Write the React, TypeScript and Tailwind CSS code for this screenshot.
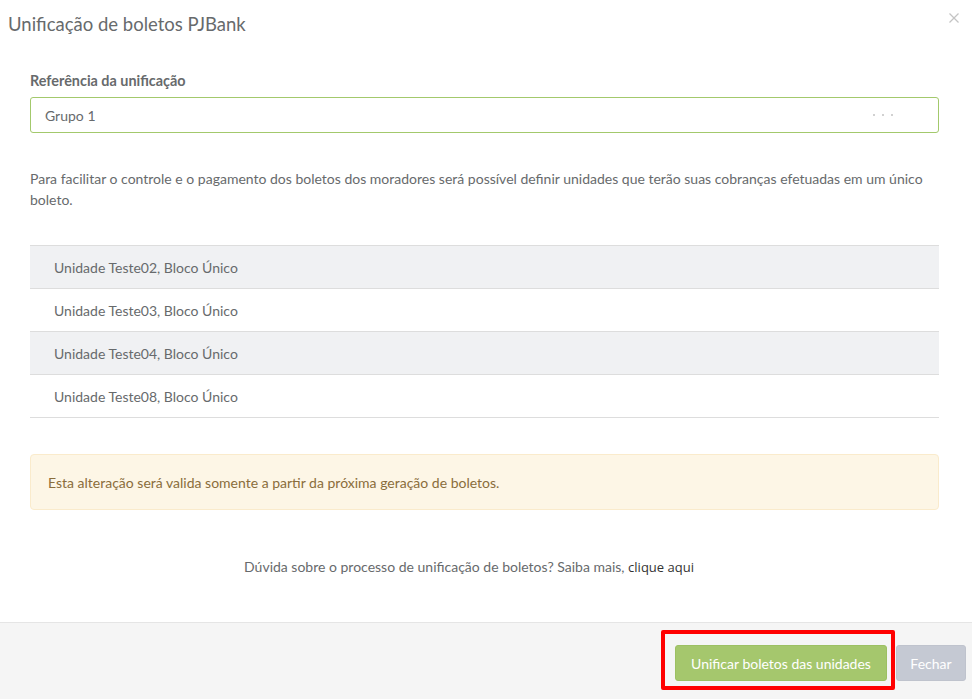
import React from "react";

const units = [
  "Unidade Teste02, Bloco Único",
  "Unidade Teste03, Bloco Único",
  "Unidade Teste04, Bloco Único",
  "Unidade Teste08, Bloco Único",
];

export default function App() {
  return (
    <div
      className="w-[972px] h-[699px] bg-white text-[#676a6c] flex flex-col overflow-hidden"
      style={{ fontFamily: "Lato, 'Open Sans', Arial, sans-serif" }}
    >
      {/* header */}
      <div className="h-[48px] flex items-center justify-between pl-[8px] pr-[12px] shrink-0">
        <h4 className="text-[18.5px] leading-[24px] text-[#676a6c]">Unificação de boletos PJBank</h4>
        <button className="w-[12px] h-[12px] -mt-[12px] flex items-center justify-center">
          <svg width="10" height="10" viewBox="0 0 10 10" stroke="#c4c4c4" strokeWidth="1.3">
            <line x1="0.5" y1="0.5" x2="9.5" y2="9.5" />
            <line x1="9.5" y1="0.5" x2="0.5" y2="9.5" />
          </svg>
        </button>
      </div>

      {/* body */}
      <div className="pl-[30px] pr-[33px] pt-[24px]">
        <label className="block text-[14.4px] leading-[18px] font-bold text-[#676a6c] mb-[7px]">
          Referência da unificação
        </label>
        <div className="h-[36px] border border-[#a3c96c] rounded-[3px] flex items-center pl-[14px] pr-[45px] justify-between">
          <span className="text-[14px] text-[#676a6c]">Grupo 1</span>
          <span className="flex gap-[7px]">
            <span className="w-[2px] h-[2px] rounded-full bg-[#c2c2c2]" />
            <span className="w-[2px] h-[2px] rounded-full bg-[#c2c2c2]" />
            <span className="w-[2px] h-[2px] rounded-full bg-[#c2c2c2]" />
          </span>
        </div>

        <p className="mt-[35px] text-[14px] leading-[21px] text-[#676a6c]">
          Para facilitar o controle e o pagamento dos boletos dos moradores será possível definir unidades que terão suas cobranças efetuadas em um único boleto.
        </p>

        <ul className="mt-[35px] border-b border-[#dddddd]">
          {units.map((u, i) => (
            <li
              key={u}
              className={`h-[43px] border-t border-[#dddddd] flex items-center pl-[24px] text-[14px] text-[#676a6c] ${
                i % 2 === 0 ? "bg-[#f0f1f3]" : "bg-white"
              }`}
            >
              {u}
            </li>
          ))}
        </ul>

        <div className="mt-[36px] h-[56px] rounded-[4px] border border-[#faebcc] bg-[#fdf6e6] flex items-center pl-[17px] text-[14px] text-[#8a6d3b]">
          Esta alteração será valida somente a partir da próxima geração de boletos.
        </div>

        <p className="mt-[47px] text-center text-[14px] leading-[20px] text-[#676a6c] pr-[31px]">
          Dúvida sobre o processo de unificação de boletos? Saiba mais,{" "}
          <a
            className="text-[#333333] font-normal text-[13px]"
            style={{ fontFamily: "'Open Sans', Arial, sans-serif" }}
          >
            clique aqui
          </a>
        </p>
      </div>

      {/* footer */}
      <div className="mt-[45px] flex-1 border-t border-[#e5e5e5] bg-[#f5f5f5] flex justify-end items-start pt-[22px] pr-[6px] gap-[9px]">
        <div className="relative">
          <span className="absolute -left-[14px] -top-[15px] w-[234px] h-[60px] border-4 border-[#ff0000] rounded-[2px]" />
          <button className="relative h-[36px] w-[212px] rounded-[3px] bg-[#a5c76d] border border-[#9cc062] text-white text-[14px]">
            Unificar boletos das unidades
          </button>
        </div>
        <button className="h-[36px] w-[70px] rounded-[3px] bg-[#c5c9d3] border border-[#bfc3cd] text-white text-[14px]">
          Fechar
        </button>
      </div>
    </div>
  );
}
